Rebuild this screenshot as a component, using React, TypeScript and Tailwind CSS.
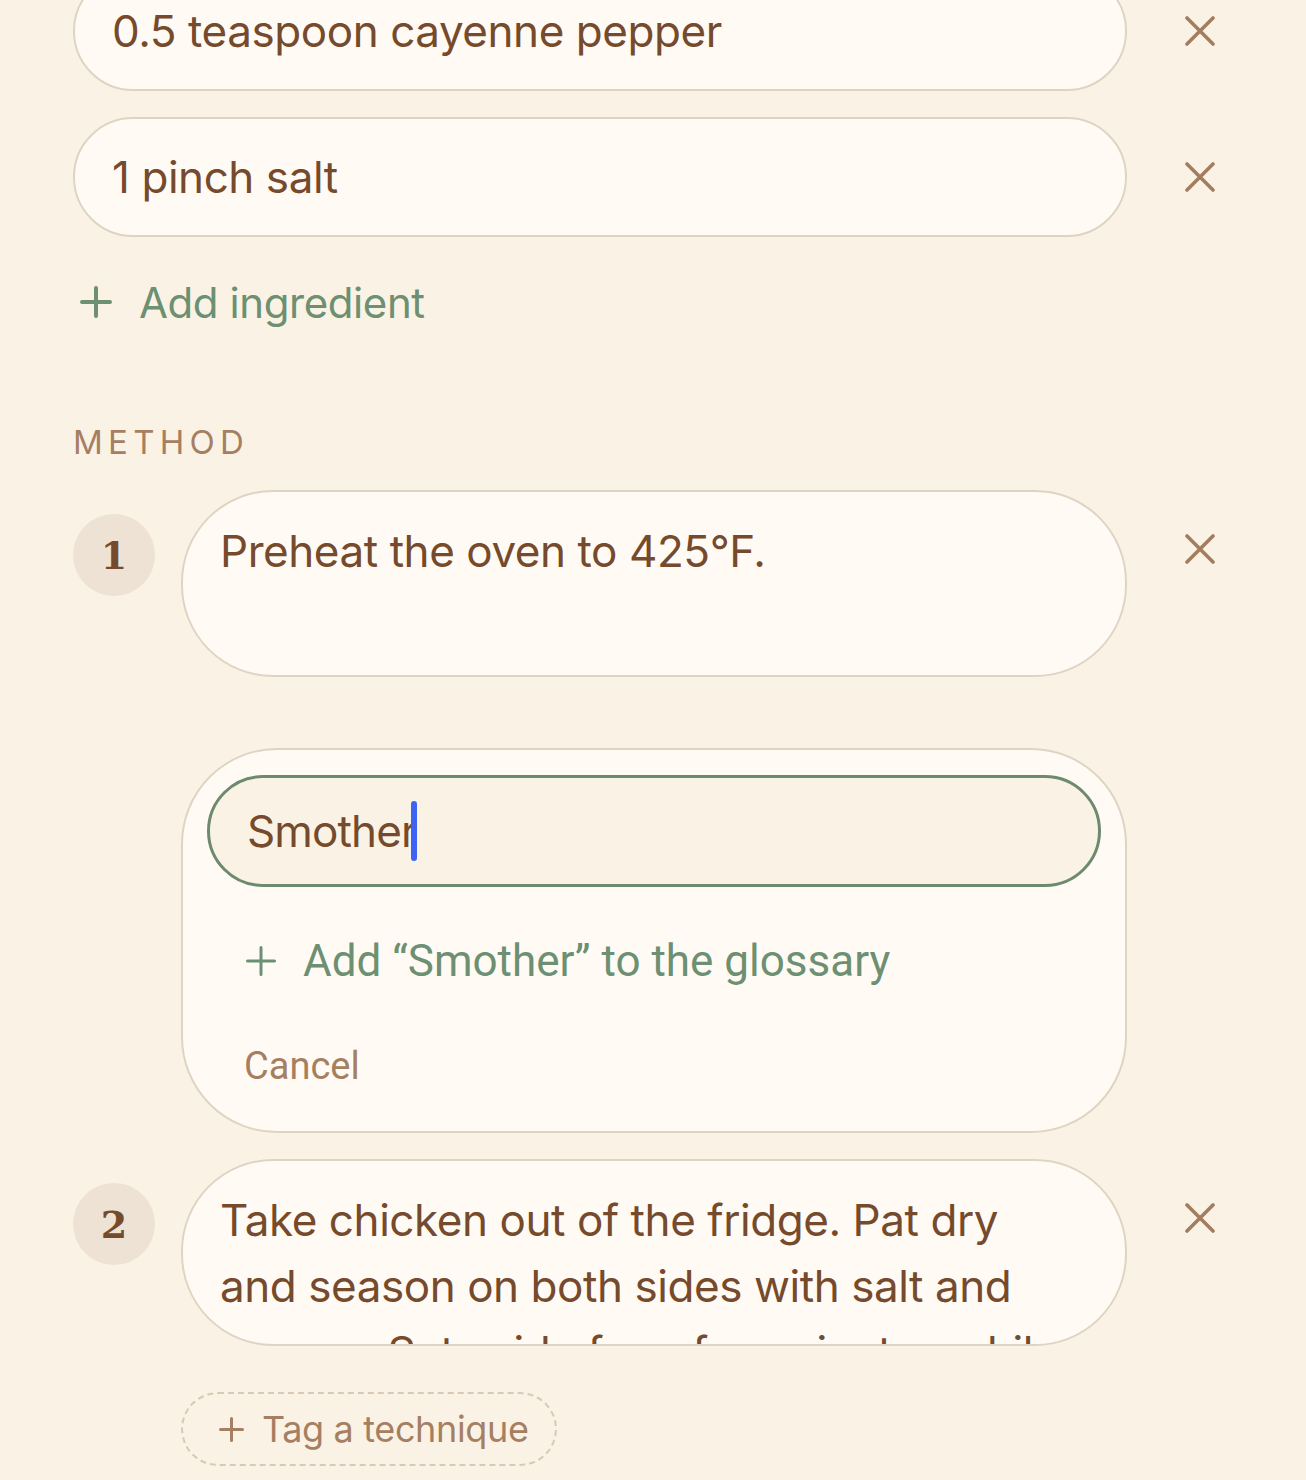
import React from 'react'

const sans = { fontFamily: 'Inter, "Noto Sans", sans-serif' }

function XIcon() {
  return (
    <svg width="30" height="30" viewBox="0 0 30 30" className="shrink-0">
      <path d="M2 2 28 28M28 2 2 28" stroke="#a37d60" strokeWidth="3.6" strokeLinecap="round" />
    </svg>
  )
}

function Plus({ size, stroke, color }: { size: number; stroke: number; color: string }) {
  return (
    <svg width={size} height={size} viewBox={`0 0 ${size} ${size}`} className="shrink-0">
      <path
        d={`M${size / 2} ${stroke / 2}V${size - stroke / 2}M${stroke / 2} ${size / 2}H${size - stroke / 2}`}
        stroke={color}
        strokeWidth={stroke}
        strokeLinecap="round"
      />
    </svg>
  )
}

function Ingredient({ text }: { text: string }) {
  return (
    <div className="flex items-center">
      <div className="flex h-[120px] w-[1054px] items-center rounded-full border-2 border-[#dfd4c3] bg-[#fffbf4] pl-[37px] text-[44px] tracking-[-0.01em] text-[#764a2c]">
        {text}
      </div>
      <div className="ml-[58px]">
        <XIcon />
      </div>
    </div>
  )
}

function StepBadge({ n }: { n: number }) {
  return (
    <div
      className="mt-[24px] flex h-[82px] w-[82px] shrink-0 items-center justify-center rounded-full bg-[#ede2d4] text-[38px] font-bold text-[#764a2c]"
      style={{ fontFamily: '"DejaVu Serif", "Liberation Serif", serif' }}
    >
      {n}
    </div>
  )
}

function Step({ n, lines }: { n: number; lines: string[] }) {
  return (
    <div className="flex items-start">
      <StepBadge n={n} />
      <div className="ml-[26px] h-[187px] w-[946px] overflow-hidden rounded-[92px] border-2 border-[#dfd4c3] bg-[#fffbf4] pl-[37px] pt-[26px] text-[44px] leading-[66px] tracking-[-0.01em] text-[#764a2c]">
        {lines.map((l) => (
          <div key={l} className="whitespace-nowrap">
            {l}
          </div>
        ))}
      </div>
      <div className="ml-[58px] mt-[44px]">
        <XIcon />
      </div>
    </div>
  )
}

export default function App() {
  return (
    <div className="min-h-[1480px] overflow-hidden bg-[#faf3e5] pl-[73px]" style={sans}>
      <div className="-mt-[29px] flex flex-col gap-[26px]">
        <Ingredient text="0.5 teaspoon cayenne pepper" />
        <Ingredient text="1 pinch salt" />
      </div>

      <button className="mt-[45px] flex h-[40px] items-center text-[42px] tracking-[-0.01em] text-[#6d8f72]">
        <span className="ml-[7px] mr-[27px]">
          <Plus size={32} stroke={4} color="#6d8f72" />
        </span>
        Add ingredient
      </button>

      <div className="mt-[100px] text-[33px] leading-[40px] tracking-[0.16em] text-[#a67f62]">METHOD</div>

      <div className="mt-[28px]">
        <Step n={1} lines={['Preheat the oven to 425°F.']} />
      </div>

      <div className="ml-[108px] mt-[71px] h-[385px] w-[946px] rounded-[96px] border-2 border-[#dfd4c3] bg-[#fffbf4] px-[24px] pt-[25px]">
        <div className="flex h-[112px] w-[894px] items-center rounded-full border-[3px] border-[#6d8a6f] bg-[#faf3e5] pl-[37px] text-[44px] tracking-[-0.02em] text-[#764a2c]">
          Smother
          <span className="ml-[-6px] h-[60px] w-[6px] rounded-full bg-[#3d63f5]" />
        </div>
        <button
          className="ml-[39px] mt-[54px] flex h-[40px] items-center text-[44px] text-[#6d8f72]"
          style={{ fontFamily: 'Roboto, sans-serif' }}
        >
          <Plus size={30} stroke={3} color="#6d8f72" />
          <span className="ml-[27px]">Add “Smother” to the glossary</span>
        </button>
        <button
          className="ml-[37px] mt-[57px] block h-[40px] text-[38px] text-[#a67f62]"
          style={{ fontFamily: 'Roboto, sans-serif' }}
        >
          Cancel
        </button>
      </div>

      <div className="mt-[26px]">
        <Step
          n={2}
          lines={[
            'Take chicken out of the fridge. Pat dry',
            'and season on both sides with salt and',
            'pepper. Set aside for a few minutes while',
          ]}
        />
      </div>

      <button className="ml-[108px] mt-[46px] flex h-[74px] w-[376px] items-center rounded-full border-2 border-dashed border-[#d8c9b6] pl-[36px] text-[36px] tracking-[-0.01em] text-[#a67f62]">
        <Plus size={25} stroke={3} color="#a67f62" />
        <span className="ml-[18px]">Tag a technique</span>
      </button>
    </div>
  )
}
